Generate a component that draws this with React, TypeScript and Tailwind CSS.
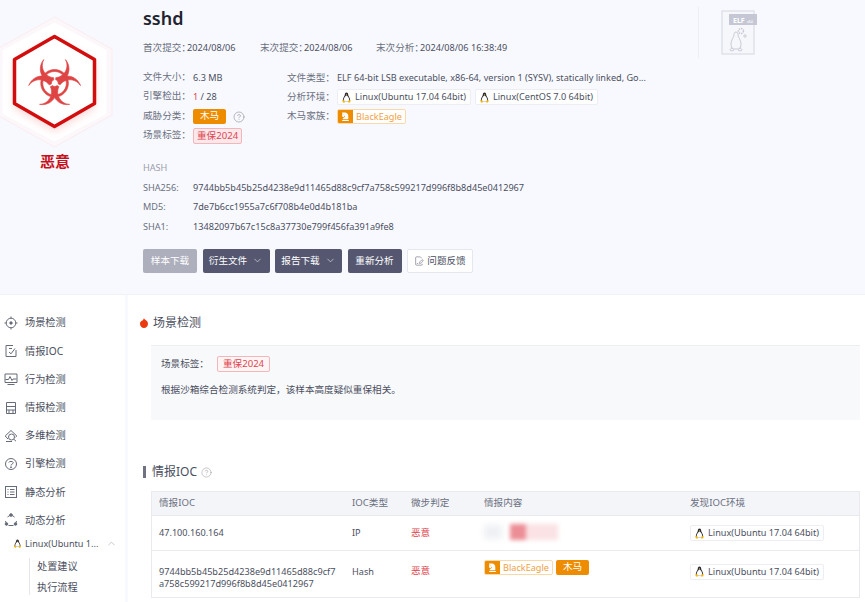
import React from "react";
import { ChevronDown, ChevronUp, CircleHelp, FilePenLine } from "lucide-react";
import { FaChessKnight } from "react-icons/fa";
import { GiBiohazard } from "react-icons/gi";

const Penguin = ({ s = 11 }: { s?: number }) => (
  <svg width={s} height={s} viewBox="0 0 12 12" className="shrink-0">
    <path d="M6 .5C4.600.5 4.200 1.600 4.200 2.800 4.200 4.400 2 6.400 2 8.800c0 .6.2 1 .5 1.200h7c.3-.2.5-.6.5-1.200C10 6.400 7.800 4.400 7.800 2.800 7.800 1.600 7.400.5 6 .5Z" fill="#2a2a33" />
    <path d="M6 3.800c-1 0-3 3-3 5 0 .7.300 1.200.8 1.200h4.400c.5 0 .8-.5.8-1.200 0-2-2-5-3-5Z" fill="#fff" />
    <path d="M5.300 2.700 6 2.300l.7.400L6 3.400Z" fill="#f5b400" />
    <path d="M1.200 9.300 3.500 8.600l.8 2.900H2.200ZM10.800 9.300 8.500 8.600l-.8 2.900h2.100Z" fill="#f5b400" />
  </svg>
);

const EnvTag = ({ children }: { children: React.ReactNode }) => (
  <span className="inline-flex h-[16px] items-center gap-[3px] rounded-[2px] border border-[#eceef3] bg-white pr-[4px] pl-[3px] text-[9.150px] text-[#4b4f5e]">
    <Penguin />
    {children}
  </span>
);

const TrojanTag = () => (
  <span className="inline-flex h-[15px] w-[33px] items-center justify-center rounded-[2px] bg-[#ee8c00] text-[9.6px] text-white">木马</span>
);

const FamilyTag = () => (
  <span className="inline-flex h-[15px] items-stretch overflow-hidden rounded-[2px] border border-[#f9d9a8] bg-white text-[9.150px]">
    <span className="flex w-[15px] items-center justify-center bg-[#ee8c00] text-white">
      <FaChessKnight size={9} />
    </span>
    <span className="flex items-center px-[3px] text-[#f0a040]">BlackEagle</span>
  </span>
);

const SceneTag = ({ light }: { light?: boolean }) => (
  <span className={`inline-flex h-[16px] items-center justify-center rounded-[2px] border border-[#f2b6bb] text-[9.6px] text-[#e0454f] ${light ? "bg-[#fff5f5] px-[5px]" : "bg-[#fbe8ea] px-[3px]"}`}>重保2024</span>
);

const Logo = () => (
  <svg width="130" height="150" viewBox="0 0 130 150" className="block overflow-visible">
    <defs>
      <filter id="glow" x="-30%" y="-30%" width="160%" height="160%">
        <feGaussianBlur stdDeviation="4" />
      </filter>
    </defs>
    <polygon points="54.500,17 112,49 112,115 54.500,147 -3,115 -3,49" fill="#fbf7fa" stroke="#fcecee" strokeWidth="1" />
    <polygon points="54.500,26 103.500,52 103.500,112 54.500,138 5.500,112 5.500,52" fill="#fff" stroke="#fff" strokeWidth="6" strokeLinejoin="round" />
    <polygon points="54.500,40 94.500,62 94.500,108 54.500,131 14.500,108 14.500,62" fill="#f4a0a0" filter="url(#glow)" opacity="0.45" />
    <polygon points="54.500,36.500 94.500,59.500 94.500,103.500 54.500,126.500 14.500,103.500 14.500,59.500" fill="#fff" stroke="#d20d0d" strokeWidth="3.500" strokeLinejoin="round" />
    <g transform="translate(26.500,55)">
      <GiBiohazard size={56} color="#df4444" stroke="#df4444" strokeWidth={6} />
    </g>
  </svg>
);

const I = ({ children }: { children: React.ReactNode }) => (
  <svg width="14" height="14" viewBox="0 0 14 14" fill="none" stroke="#666b78" strokeWidth="1" className="shrink-0">{children}</svg>
);

const navItems: [string, React.ReactNode][] = [
  ["场景检测", <I key="a"><circle cx="7" cy="7" r="4.800" /><circle cx="7" cy="7" r="1.200" fill="#666b78" /><path d="M7 .5v2M7 11.500v2M.5 7h2M11.500 7h2" /></I>],
  ["情报IOC", <I key="b"><path d="M12 6v6.500H2v-11h7" /><path d="M5 8l2 1.800 4-5.300M5 4.500h3" /></I>],
  ["行为检测", <I key="c"><path d="M1 2h12v8.500H1Z" /><path d="M1.500 7.500h3L6 4.500l2 4 1-1.500h3.500M3.500 12.500h7" /></I>],
  ["情报检测", <I key="d"><path d="M2.500 1.500h9v11h-9ZM2.500 5.500h9M2.500 9h9M7 9" /><path d="M5 9v3.500M9 9v3.500" /></I>],
  ["多维检测", <I key="e"><path d="M4 10 1.200 7 7 1.500 12.800 7 11.500 8.200" /><circle cx="7.500" cy="8" r="3" /><path d="M9.800 10.200l2.200 2M2 12.500h6" /></I>],
  ["引擎检测", <I key="f"><circle cx="7" cy="7" r="5.500" /><path d="M4.800 5.500C5 4 9 4 9.200 5.500 9.300 7 7 7 7 8.500" /><circle cx="7" cy="10.200" r=".5" fill="#666b78" /></I>],
  ["静态分析", <I key="g"><rect x="1.500" y="1.500" width="11" height="11" /><path d="M3.500 4.500h1M6 4.500h4.500M3.500 7h1M6 7h4.500M3.500 9.500h1M6 9.500h4.500" /></I>],
  ["动态分析", <I key="h"><path d="M3.500 4a5.200 5.200 0 0 1 7 0M12.500 8a5.500 5.500 0 0 1-1 2.500M2.500 10.500A5.500 5.500 0 0 1 1.500 8M4.500 12.500h5" /><circle cx="7" cy="2" r="1.300" fill="#666b78" /><circle cx="2.500" cy="11" r="1.300" fill="#666b78" /><circle cx="11.500" cy="11" r="1.300" fill="#666b78" /></I>],
];

const Sidebar = () => (
  <aside className="h-full w-[128px] shrink-0 border-r-[3px] border-[#f8f9fe] pt-[14px] text-[10.200px] text-[#4b4f5e]">
    {navItems.map(([label, icon]) => (
      <div key={label} className="flex h-[28.200px] items-center gap-[7px] pl-[4px]">
        {icon}
        <span>{label}</span>
      </div>
    ))}
    <div className="mt-[2px] flex h-[14px] items-center gap-[3px] pl-[13px] text-[9.150px]">
      <Penguin s={9} />
      <span>Linux(Ubuntu 1...</span>
      <ChevronUp size={11} strokeWidth={1} className="ml-[5px] text-[#888]" />
    </div>
    <div className="mt-[7px] ml-[29px] flex flex-col gap-[5px] border-l border-[#e4e6ec] pl-[7px] leading-[16px]">
      <span>处置建议</span>
      <span>执行流程</span>
    </div>
  </aside>
);

const Lab = ({ w, children }: { w: string; children: React.ReactNode }) => (
  <span className={`inline-block ${w} text-[9.600px] whitespace-nowrap text-[#6b7080]`}>{children}</span>
);

const Header = () => (
  <header className="flex h-[295px] border-b border-[#f1f2f6] bg-[#f8f9fe]">
    <div className="w-[143px] shrink-0">
      <Logo />
      <div className="mt-[1px] w-[110px] text-center text-[15px] leading-[20px] font-bold text-[#c8101a]">恶意</div>
    </div>
    <div className="w-[555px] shrink-0 pt-[7px] text-[9.150px] text-[#4b4f5e]">
      <h1 className="-mt-[1px] text-[18px] leading-[24px] font-semibold text-[#1f2430]">sshd</h1>
      <div className="mt-[11px] flex h-[14px] items-center">
        <span className="w-[117px]"><Lab w="w-[44px]">首次提交：</Lab>2024/08/06</span>
        <span className="w-[116px]"><Lab w="w-[44px]">末次提交：</Lab>2024/08/06</span>
        <span><Lab w="w-[44px]">末次分析：</Lab>2024/08/06 16:38:49</span>
      </div>
      <div className="mt-[15px] grid grid-cols-[50px_94px_50px_1fr] items-center gap-y-[3.300px]">
        <Lab w="flex h-[16px] items-center">文件大小：</Lab>
        <span>6.3 MB</span>
        <Lab w="">文件类型：</Lab>
        <span className="whitespace-nowrap">ELF 64-bit LSB executable, x86-64, version 1 (SYSV), statically linked, Go...</span>

        <Lab w="flex h-[16px] items-center">引擎检出：</Lab>
        <span><span className="text-[#e0454f]">1</span> / 28</span>
        <Lab w="">分析环境：</Lab>
        <span className="flex gap-[4px]"><EnvTag>Linux(Ubuntu 17.04 64bit)</EnvTag><EnvTag>Linux(CentOS 7.0 64bit)</EnvTag></span>

        <Lab w="flex h-[16px] items-center">威胁分类：</Lab>
        <span className="flex items-center gap-[7px]"><TrojanTag /><CircleHelp size={12} strokeWidth={1} className="text-[#777]" /></span>
        <Lab w="">木马家族：</Lab>
        <span className="flex"><FamilyTag /></span>

        <Lab w="flex h-[16px] items-center">场景标签：</Lab>
        <span className="flex"><SceneTag /></span>
      </div>
      <div className="mt-[17px] grid grid-cols-[50px_1fr] gap-y-[5.700px] leading-[14px]">
        <span className="col-span-2 text-[#9a9dab]">HASH</span>
        <span className="text-[#6b7080]">SHA256:</span><span className="whitespace-nowrap">9744bb5b45b25d4238e9d11465d88c9cf7a758c599217d996f8b8d45e0412967</span>
        <span className="text-[#6b7080]">MD5:</span><span>7de7b6cc1955a7c6f708b4e0d4b181ba</span>
        <span className="text-[#6b7080]">SHA1:</span><span>13482097b67c15c8a37730e799f456fa391a9fe8</span>
      </div>
      <div className="mt-[15px] flex gap-[5.500px] text-[9.600px] text-white">
        <button className="h-[24px] w-[54px] rounded-[2px] bg-[#adafbc]">样本下载</button>
        <button className="flex h-[24px] w-[67px] items-center justify-center gap-[5px] rounded-[2px] bg-[#555770]">衍生文件<ChevronDown size={11} strokeWidth={1.200} /></button>
        <button className="flex h-[24px] w-[67px] items-center justify-center gap-[5px] rounded-[2px] bg-[#555770]">报告下载<ChevronDown size={11} strokeWidth={1.200} /></button>
        <button className="h-[24px] w-[54px] rounded-[2px] bg-[#555770]">重新分析</button>
        <button className="flex h-[24px] w-[66px] items-center justify-center gap-[3px] rounded-[2px] border border-[#e5e7ee] bg-white text-[#4b4f5e]"><FilePenLine size={10} strokeWidth={1.200} />问题反馈</button>
      </div>
    </div>
    <div className="mt-[7px] h-[51px] w-px bg-[#edeef4]" />
    <div className="ml-[22px] pt-[10px]">
      <svg width="36" height="46" viewBox="0 0 36 46" fill="none">
        <rect x="1" y="1" width="32" height="43" fill="#f6f7fb" stroke="#e0e2ea" strokeWidth="1.500" />
        <rect x="8" y="4" width="28" height="11" fill="#c5c8d4" />
        <text x="12" y="13" fontSize="7" fontWeight="700" fill="#fff" fontFamily="Noto Sans">ELF</text>
        <text x="26" y="12.500" fontSize="3.500" fill="#fff" fontFamily="Noto Sans">x64</text>
        <path d="M15 22c-2 0-2 2-2 3 0 2-3 5-3 9 0 3 1 5 2 5h6c1 0 2-2 2-5 0-4-3-7-3-9 0-1 0-3-2-3Z" stroke="#c8cbd6" />
        <circle cx="20" cy="21" r="2.500" stroke="#c8cbd6" strokeWidth="1.500" strokeDasharray="1.500 .8" />
        <circle cx="24" cy="26" r="1.200" stroke="#c8cbd6" />
        <path d="M12 38c-2 0-3 1-3 2s3 1 4 0M18 38c2 0 3 1 3 2s-3 1-4 0" stroke="#c8cbd6" />
      </svg>
    </div>
  </header>
);

const rowCls = "grid grid-cols-[193px_59px_73px_206px_1fr] items-center border-t border-[#e8eaf0] pl-[7px]";

const Main = () => (
  <main className="flex-1 pl-[12px] pr-[5px] text-[9.150px] text-[#4b4f5e]">
    <div className="flex h-[50px] items-center gap-[5px] pt-[5px]">
      <svg width="8" height="10" viewBox="0 0 8 10" className="shrink-0"><path d="M4 0c.3 1 .8 1.400 1.600 1.900C7 2.800 8 4 8 5.800 8 8.200 6.200 10 4 10S0 8.200 0 5.800C0 4 1 3 2.300 2.500 3 2.200 3.800 1.200 4 0Z" fill="#ea3a10" /></svg>
      <span className="text-[12px] text-[#4b4f5e]">场景检测</span>
    </div>
    <div className="ml-[11px] h-[75px] border-t border-[#eceef3] bg-[#f8f9fb] pl-[10px] pt-[10px] text-[9.600px]">
      <div className="flex items-center gap-[8px]">
        <span>场景标签：</span>
        <SceneTag light />
      </div>
      <p className="mt-[11px] leading-[14px]">根据沙箱综合检测系统判定，该样本高度疑似重保相关。</p>
    </div>
    <div className="mt-[42px] flex h-[18px] items-center pt-[2px] pl-[3px]">
      <span className="mr-[6px] h-[12px] w-[3px] bg-[#6f7280]" />
      <span className="text-[12px]">情报IOC</span>
      <CircleHelp size={11} strokeWidth={1} className="ml-[4px] text-[#888]" />
    </div>
    <div className="mt-[11px] ml-[11px] border border-t-0 border-[#e8eaf0]">
      <div className="grid h-[24px] grid-cols-[193px_59px_73px_206px_1fr] items-center border-t border-[#e8eaf0] bg-[#f4f5f9] pl-[7px] text-[9.600px] text-[#6b7080]">
        <span>情报IOC</span><span>IOC类型</span><span>微步判定</span><span>情报内容</span><span>发现IOC环境</span>
      </div>
      <div className={`${rowCls} h-[35px]`}>
        <span>47.100.160.164</span><span>IP</span><span className="text-[9.600px] text-[#e0454f]">恶意</span>
        <span className="flex items-center gap-[8px] pb-[2px]">
          <span className="h-[14px] w-[18px] bg-[#eef0f4] blur-[3px]" />
          <span className="flex h-[16px] blur-[2px]"><span className="w-[16px] bg-[#ec8e96]" /><span className="w-[32px] bg-[#fbe2e4]" /></span>
        </span>
        <span className="flex"><EnvTag>Linux(Ubuntu 17.04 64bit)</EnvTag></span>
      </div>
      <div className={`${rowCls} h-[47px] pb-[5px]`}>
        <span className="w-[180px] self-start pt-[15px] leading-[12px] break-all">9744bb5b45b25d4238e9d11465d88c9cf7a758c599217d996f8b8d45e0412967</span>
        <span>Hash</span><span className="text-[9.600px] text-[#e0454f]">恶意</span>
        <span className="flex gap-[3px] self-start pt-[9px]"><FamilyTag /><TrojanTag /></span>
        <span className="flex"><EnvTag>Linux(Ubuntu 17.04 64bit)</EnvTag></span>
      </div>
    </div>
  </main>
);

export default function App() {
  return (
    <div className="h-[602px] w-[865px] overflow-hidden bg-white font-['Noto_Sans','Noto_Sans_CJK_SC',sans-serif]">
      <Header />
      <div className="flex h-[307px]">
        <Sidebar />
        <Main />
      </div>
    </div>
  );
}
